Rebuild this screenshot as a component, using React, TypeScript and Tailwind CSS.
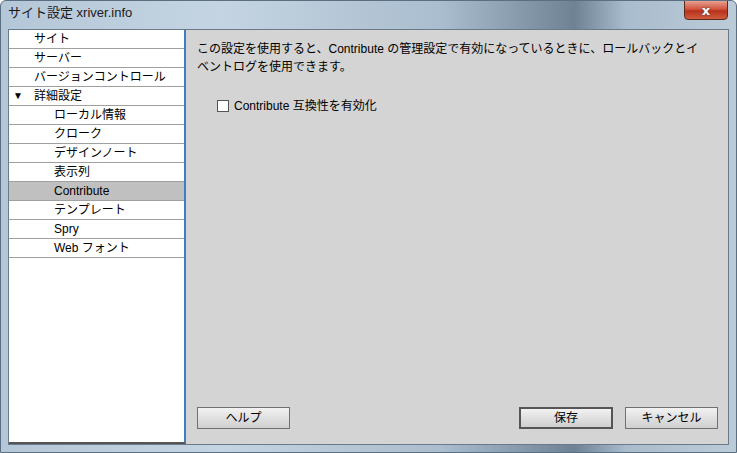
import React from "react";

const font = "font-['Liberation_Sans','Noto_Sans_CJK_JP',sans-serif]";

type Item = { label: string; level: 0 | 1; open?: boolean; selected?: boolean };

const items: Item[] = [
  { label: "サイト", level: 0 },
  { label: "サーバー", level: 0 },
  { label: "バージョンコントロール", level: 0 },
  { label: "詳細設定", level: 0, open: true },
  { label: "ローカル情報", level: 1 },
  { label: "クローク", level: 1 },
  { label: "デザインノート", level: 1 },
  { label: "表示列", level: 1 },
  { label: "Contribute", level: 1, selected: true },
  { label: "テンプレート", level: 1 },
  { label: "Spry", level: 1 },
  { label: "Web フォント", level: 1 },
];

function Button({ label, primary, className }: { label: string; primary?: boolean; className?: string }) {
  return (
    <button
      className={
        "h-[22px] flex items-center justify-center text-[12px] text-black bg-[linear-gradient(#f2f2f2,#e0e0e0_50%,#cfcfcf)] " +
        (primary ? "border-2 border-[#555] " : "border border-[#707070] ") +
        (className ?? "")
      }
    >
      {label}
    </button>
  );
}

export default function App() {
  return (
    <div className={`${font} w-[737px] h-[453px] flex flex-col rounded-t-[6px] bg-[linear-gradient(90deg,#b4c7d8_0%,#c4d4e2_30%,#aabdce_60%,#6e8294_78%,#a9bccd_85%,#bccbd8_100%)] border border-[#5a6f82] overflow-hidden`}>
      {/* title bar */}
      <div className="h-[28px] flex items-start relative">
        <span className="ml-[7px] mt-[5px] text-[13px] text-[#1a1a1a] leading-none">サイト設定 xriver.info</span>
        <div className="absolute right-[8px] top-[-1px] w-[44px] h-[20px] rounded-b-[4px] border border-[#5e2a20] bg-[linear-gradient(#e8a092,#d0553e_45%,#b8321c_55%,#cf5c3c)] flex items-center justify-center">
          <span className="text-white font-bold text-[13px] leading-none [text-shadow:0_0_2px_#333] font-['DejaVu_Sans',sans-serif]">x</span>
        </div>
      </div>
      {/* client */}
      <div className="flex-1 mx-[7px] mb-[7px] flex border border-[#6a7a88] bg-[#d4d4d4]">
        {/* tree */}
        <div className="w-[177px] shrink-0 bg-white border-r-2 border-r-[#3c7fc2] border-b-2 border-b-[#555] flex flex-col">
          {items.map((it) => (
            <div
              key={it.label}
              className={
                "h-[19px] flex items-center border-b border-[#a0a0a0] text-[12px] text-black " +
                (it.selected ? "bg-[#c0c0c0]" : "")
              }
            >
              <span className="w-[25px] pl-[4px] text-[10px] leading-none">{it.open ? "▼" : ""}</span>
              <span className={it.level === 1 ? "pl-[20px]" : ""}>{it.label}</span>
            </div>
          ))}
        </div>
        {/* panel */}
        <div className="flex-1 flex flex-col pl-[11px] pr-[10px] pt-[10px] pb-[15px] text-[12px] text-black">
          <p className="leading-[18px] whitespace-nowrap">
            この設定を使用すると、Contribute の管理設定で有効になっているときに、ロールバックとイ
            <br />
            ベントログを使用できます。
          </p>
          <label className="flex items-center gap-[5px] mt-[21px] ml-[20px]">
            <span className="w-[12px] h-[12px] border border-[#555] bg-white" />
            <span>Contribute 互換性を有効化</span>
          </label>
          <div className="flex-1" />
          <div className="flex items-center">
            <Button label="ヘルプ" className="w-[93px]" />
            <div className="flex-1" />
            <Button label="保存" primary className="w-[94px]" />
            <Button label="キャンセル" className="w-[93px] ml-[12px]" />
          </div>
        </div>
      </div>
    </div>
  );
}
